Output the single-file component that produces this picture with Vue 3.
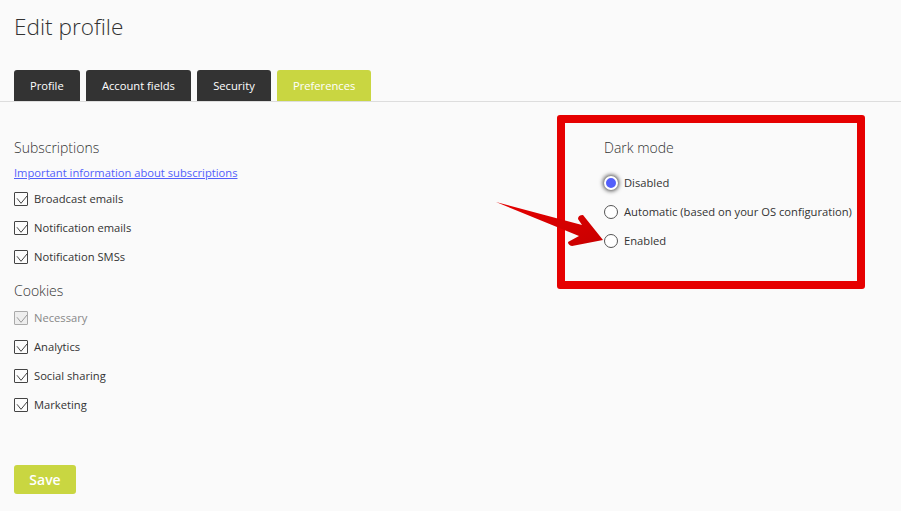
<script setup>
const tabs = [
  { label: 'Profile' },
  { label: 'Account fields' },
  { label: 'Security' },
  { label: 'Preferences', active: true }
]
const subscriptions = ['Broadcast emails', 'Notification emails', 'Notification SMSs']
const cookies = [
  { label: 'Necessary', disabled: true },
  { label: 'Analytics' },
  { label: 'Social sharing' },
  { label: 'Marketing' }
]
const modes = [
  { label: 'Disabled', checked: true },
  { label: 'Automatic (based on your OS configuration)' },
  { label: 'Enabled' }
]
</script>

<template>
  <div class="page">
    <h1>Edit profile</h1>

    <nav class="tabs">
      <span v-for="tab in tabs" :key="tab.label" class="tab" :class="{ active: tab.active }">{{ tab.label }}</span>
    </nav>

    <div class="columns">
      <section class="left">
        <h2>Subscriptions</h2>
        <a class="info" href="#">Important information about subscriptions</a>
        <ul class="list subs">
          <li v-for="item in subscriptions" :key="item" class="row">
            <span class="check">
              <svg viewBox="0 0 12 12" width="12" height="12"><path d="M2 5.3 L6 10.3 L12 3" /></svg>
            </span>
            {{ item }}
          </li>
        </ul>
        <h2 class="cookies">Cookies</h2>
        <ul class="list tight">
          <li v-for="item in cookies" :key="item.label" class="row" :class="{ disabled: item.disabled }">
            <span class="check">
              <svg viewBox="0 0 12 12" width="12" height="12"><path d="M2 5.3 L6 10.3 L12 3" /></svg>
            </span>
            {{ item.label }}
          </li>
        </ul>
        <button class="save">Save</button>
      </section>

      <section class="right">
        <h2>Dark mode</h2>
        <ul class="list modes">
          <li v-for="mode in modes" :key="mode.label" class="row">
            <span class="radio" :class="{ checked: mode.checked }"></span>
            {{ mode.label }}
          </li>
        </ul>
        <svg class="arrow" viewBox="0 0 130 60" width="130" height="60">
          <defs>
            <linearGradient id="arrowFill" x1="0" y1="0" x2="1" y2="1">
              <stop offset="0" stop-color="#e60000" />
              <stop offset="1" stop-color="#c80000" />
            </linearGradient>
          </defs>
          <path d="M3 14 L89 37 L85 31 Q85 27 90 27 L110 52 L79 58 Q75 57 75 54 L86 48 Z" fill="url(#arrowFill)" />
        </svg>
      </section>
    </div>
  </div>
</template>

<style scoped>
.page {
  width: 901px;
  height: 511px;
  box-sizing: border-box;
  padding: 11px 0 0;
  overflow: hidden;
  background: #fafafa;
  font-family: "Open Sans", sans-serif;
  color: #333;
}

h1 {
  margin: 0 0 27px 14px;
  font-size: 22.6px;
  line-height: 32px;
  font-weight: 300;
  color: #333;
}

.tabs {
  display: flex;
  gap: 6.2px;
  height: 31px;
  padding-left: 14px;
  border-bottom: 1px solid #ddd;
}

.tab {
  padding: 0 16px;
  height: 31px;
  line-height: 32px;
  font-size: 11.2px;
  color: #fff;
  background: #333;
  border-radius: 3px 3px 0 0;
}

.tab.active {
  background: #c9d641;
}

.columns {
  display: flex;
}

.left {
  width: 604px;
  padding: 36px 0 0 14px;
  box-sizing: border-box;
}

.right {
  position: relative;
  padding-top: 36px;
}

h2 {
  margin: 0;
  font-size: 14px;
  line-height: 20px;
  font-weight: 300;
  color: #333;
}

.info {
  display: block;
  margin-top: 6px;
  font-size: 11.2px;
  line-height: 18px;
  color: #535ffa;
}

.list {
  list-style: none;
  margin: 0;
  padding: 0;
}

.subs {
  margin-top: 2px;
}

.row {
  display: flex;
  align-items: center;
  height: 29px;
  gap: 6px;
  font-size: 11.2px;
  color: #333;
}

.cookies {
  margin-top: 10px;
}

.tight {
  margin-top: 2px;
}

.row.disabled {
  color: #888;
}

.check {
  display: block;
  width: 12px;
  height: 12px;
  border: 1px solid #444;
  border-radius: 1px;
  background: #fcfcfc;
}

.check svg {
  display: block;
  fill: none;
  stroke: #444;
  stroke-width: 1;
}

.disabled .check {
  border-color: #aaa;
  background: #eee;
}

.disabled .check svg {
  stroke: #999;
}

.save {
  display: block;
  margin-top: 46px;
  width: 62px;
  height: 29px;
  border: 0;
  border-radius: 3px;
  background: #c9d641;
  color: #fff;
  font-family: inherit;
  font-size: 14px;
  font-weight: 550;
}

.modes {
  margin-top: 10px;
}

.radio {
  display: block;
  box-sizing: border-box;
  width: 14px;
  height: 14px;
  border: 1px solid #555;
  border-radius: 50%;
  background: #fff;
}

.radio.checked {
  border: 2px solid #fff;
  background: #535ffa;
  box-shadow: 0 0 4px 1px #444;
}

/* the red annotation over the screenshot */
.right::before {
  content: "";
  position: absolute;
  box-sizing: border-box;
  left: -47px;
  top: 13px;
  width: 308px;
  height: 174px;
  border: 8px solid #e60000;
  border-radius: 3px;
}

.arrow {
  position: absolute;
  left: -111px;
  top: 86px;
}
</style>
